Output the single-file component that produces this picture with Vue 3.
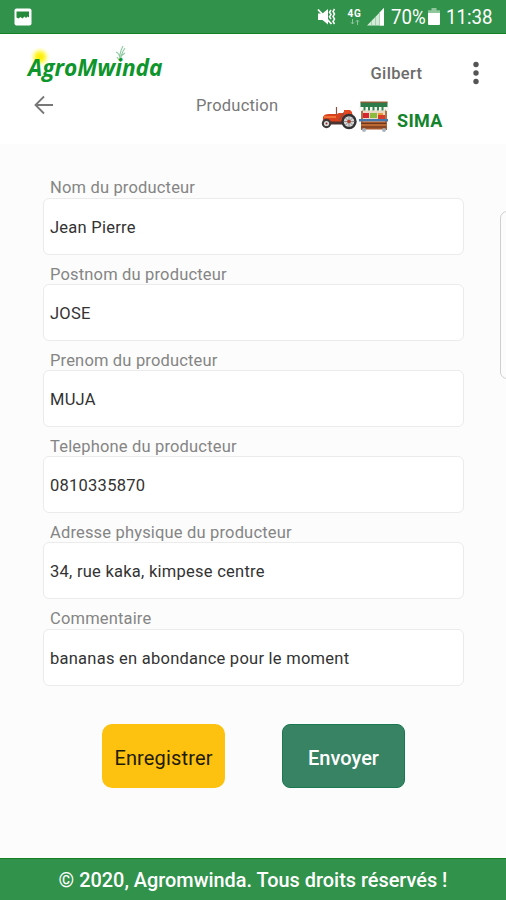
<script setup>
import { ref } from 'vue'

const fields = ref([
  { label: 'Nom du producteur', value: 'Jean Pierre' },
  { label: 'Postnom du producteur', value: 'JOSE' },
  { label: 'Prenom du producteur', value: 'MUJA' },
  { label: 'Telephone du producteur', value: '0810335870' },
  { label: 'Adresse physique du producteur', value: '34, rue kaka, kimpese centre' },
  { label: 'Commentaire', value: 'bananas en abondance pour le moment' },
])
</script>

<template>
  <div class="screen">
    <div class="status">
      <svg class="picture" width="18" height="18" viewBox="0 0 18 18">
        <rect x="0.5" y="0.5" width="17" height="17" rx="2" fill="#fff" />
        <path d="M2.500 3.500h12.500v6l-1.500-1-1.500 1.500-1.500-1.500-2 2-2-1.500-2 1.500-2-1z" fill="#268a3d" />
      </svg>
      <div class="status-right">
        <svg class="mute" width="20" height="18" viewBox="0 0 20 18">
          <path d="M1 5.500h4.500L11 1v15.500L5.500 12H1z" fill="#fff" />
          <path d="M1 1.500 14.500 16" stroke="#fff" stroke-width="1.800" />
          <path d="M14 2l-1.500 2.200 1.500 2.300-1.500 2.300 1.500 2.300M17.500 1l-1.500 2.500 1.500 2.500-1.500 2.500 1.500 2.500-1.500 2.500 1.500 2.500" fill="none" stroke="#fff" stroke-width="1.500" />
        </svg>
        <div class="net">
          <span class="net-name">4G</span>
          <svg width="10" height="6" viewBox="0 0 10 6">
            <path d="M2.500 0v5M1 3.300l1.500 1.700L4 3.300M7.500 6V1M6 2.700 7.500 1 9 2.700" fill="none" stroke="#8fc69b" stroke-width="1" />
          </svg>
        </div>
        <svg class="signal" width="18" height="18" viewBox="0 0 18 18">
          <path d="M0 17.500 17 0v17.500z" fill="#d3ead7" />
          <path d="M12.700 4.500 17 0v17.500h-4.300z" fill="#fff" />
          <path d="M4.500 13v4.500M8.500 9v8.500M12.500 5v12.500" stroke="#8fc69b" stroke-width=".7" />
        </svg>
        <span class="percent"><span class="narrow">70%</span></span>
        <svg class="battery" width="12" height="18" viewBox="0 0 12 18">
          <path d="M3.500 0h5v2.200H12V6H0V2.200h3.500z" fill="#8fc69b" />
          <path d="M0 5h12v11a1 1 0 0 1-1 1H1a1 1 0 0 1-1-1z" fill="#fff" />
        </svg>
        <span class="clock"><span class="narrow">11:38</span></span>
      </div>
    </div>

    <header class="header">
      <div class="left">
        <div class="logo">
          <svg class="sun" width="24" height="24" viewBox="0 0 24 24">
            <defs>
              <radialGradient id="glow">
                <stop offset="0" stop-color="#ffec00" />
                <stop offset=".4" stop-color="#fff52e" />
                <stop offset="1" stop-color="#ffff90" stop-opacity="0" />
              </radialGradient>
            </defs>
            <circle cx="12" cy="12" r="10" fill="url(#glow)" />
          </svg>
          <svg class="plant" width="12" height="18" viewBox="0 0 12 18">
            <path d="M5.500 17Q3.500 9 8 1M6 16Q5.500 9 10 3M5 13Q4 8 1 7M6 11l4-3M4 15l-2-3" fill="none" stroke="#8cc9a0" stroke-width="1.100" />
          </svg>
          <span class="logo-text">AgroMwinda</span>
        </div>
        <svg class="back" width="20" height="20" viewBox="0 0 20 20">
          <path d="M19 10H2M10 1.500 1.500 10l8.500 8.500" fill="none" stroke="#777" stroke-width="1.800" />
        </svg>
      </div>
      <h1 class="title">Production</h1>
      <div class="right">
        <div class="user-row">
          <span class="user">Gilbert</span>
          <svg class="dots" width="8" height="24" viewBox="0 0 8 24">
            <circle cx="4" cy="3.500" r="2.700" fill="#555" />
            <circle cx="4" cy="12" r="2.700" fill="#555" />
            <circle cx="4" cy="20.500" r="2.700" fill="#555" />
          </svg>
        </div>
        <div class="brand">
          <svg class="tractor" width="36" height="24" viewBox="0 0 36 24">
            <path d="M2 11q1-3 6-3h8l2-1h13l1 3 2 3-3 3H18l-4 2H4l-2-2z" fill="#d9401c" />
            <path d="M3 10h12v2H3z" fill="#f07035" />
            <path d="M15.500 9V1M18 14l6-9" fill="none" stroke="#8b5145" stroke-width="1.200" />
            <path d="M23 4h6l2 2v4h-8z" fill="#e34822" />
            <path d="M8 17h15" stroke="#4b3431" stroke-width="3" />
            <circle cx="5.500" cy="17.500" r="4.700" fill="#3f3b3b" />
            <circle cx="5.500" cy="17.500" r="2.600" fill="#ddd" />
            <circle cx="5.500" cy="17.500" r="1" fill="#8b2d20" />
            <circle cx="28" cy="15.500" r="7.700" fill="#333" />
            <circle cx="28" cy="15.500" r="5.200" fill="#d8d8d8" />
            <path d="M28 10.500v10M23 15.500h10M24.500 12l7 7M31.500 12l-7 7" stroke="#777" stroke-width=".8" />
            <circle cx="28" cy="15.500" r="1.800" fill="#b03a25" />
          </svg>
          <svg width="30" height="32" viewBox="0 0 30 32">
            <path d="M2 6h2v23H2zM26 6h2v23h-2z" fill="#a8744a" />
            <path d="M4 8h22v12H4z" fill="#ead9c4" />
            <path d="M1.500 1h27v5.500H1.500z" fill="#2c7a48" />
            <path d="M1.500 .5h27v1.300H1.500z" fill="#9c5a35" />
            <path d="M0 6h30v2q0 2-2 2t-2-2q0 2-2.100 2t-2.200-2q0 2-2.200 2t-2.200-2q0 2-2.200 2T13 8q0 2-2.200 2T8.500 8q0 2-2.100 2T4.200 8q0 2-2 2T0 8z" fill="#f7f7f0" />
            <path d="M4.500 6h2v3.500h-2zM9 6h2v3.500H9zM13.500 6h2v3.500h-2zM18 6h2v3.500h-2zM22.500 6h2v3.500h-2z" fill="#338653" />
            <path d="M4 12h6v5H4z" fill="#d7262f" />
            <path d="M11 12h7v5h-7z" fill="#8abb3c" />
            <path d="M19 14h7v4h-7z" fill="#d73b2c" />
            <path d="M19 12h5v2h-5z" fill="#e99a35" />
            <path d="M0 18h29v2.500H0z" fill="#4576ad" />
            <path d="M2 20.500h25.500v8H2z" fill="#a7572c" />
            <path d="M2 22.500h25.500M2 26h25.500" stroke="#6e371f" stroke-width="1" />
            <path d="M2 24h25.500" stroke="#cf7a3b" stroke-width="1" />
            <circle cx="5" cy="29" r="2" fill="#a7b4bf" />
            <circle cx="25" cy="29" r="2" fill="#a7b4bf" />
          </svg>
          <span class="sima">SIMA</span>
        </div>
      </div>
    </header>

    <main class="form">
      <label v-for="f in fields" :key="f.label" class="field">
        <span class="label">{{ f.label }}</span>
        <span class="box"><span class="value">{{ f.value }}</span></span>
      </label>
      <div class="actions">
        <button class="btn save" type="button">Enregistrer</button>
        <button class="btn send" type="button">Envoyer</button>
      </div>
      <span class="edge-handle"></span>
    </main>

    <footer class="footer">© 2020, Agromwinda. Tous droits réservés !</footer>
  </div>
</template>

<style>
body {
  margin: 0;
}
</style>

<style scoped>
.screen {
  position: relative;
  display: flex;
  flex-direction: column;
  width: 506px;
  height: 900px;
  overflow: hidden;
  background: #fcfcfc;
  font-family: Roboto, "Liberation Sans", sans-serif;
}
.status {
  display: flex;
  justify-content: space-between;
  box-sizing: border-box;
  height: 34px;
  padding: 0 14px;
  background: #31924b;
  border-bottom: 1px solid #138022;
  color: #fff;
}
.picture {
  margin-top: 8px;
}
.status-right {
  display: flex;
  align-items: flex-start;
}
.mute {
  margin: 8px 10px 0 0;
}
.net {
  display: flex;
  flex-direction: column;
  align-items: center;
  width: 15px;
  margin: 9px 5px 0 0;
}
.net-name {
  font-size: 10px;
  font-weight: 700;
  line-height: 10px;
  letter-spacing: 0.8px;
}
.signal {
  margin: 8px 6px 0 0;
}
.percent,
.clock {
  font-size: 21px;
  line-height: 35px;
  white-space: nowrap;
}
.narrow {
  display: inline-block;
  transform: scaleX(0.89);
  transform-origin: left;
}
.percent {
  width: 34px;
}
.battery {
  margin: 8px 6px 0 3px;
}
.clock {
  width: 46px;
}
.header {
  display: flex;
  box-sizing: border-box;
  height: 110px;
  background: #fff;
}
.left {
  display: flex;
  flex-direction: column;
  width: 196px;
}
.logo {
  position: relative;
  height: 61px;
  padding: 20px 0 0 28px;
  box-sizing: border-box;
}
.logo-text {
  position: relative;
  display: block;
  font: italic 700 22.7px/28px "Open Sans", "Noto Sans", sans-serif;
  color: #0e952b;
  white-space: nowrap;
}
.sun {
  position: absolute;
  left: 28px;
  top: 11px;
}
.plant {
  position: absolute;
  left: 115px;
  top: 11px;
}
.back {
  margin-left: 34px;
}
.title {
  width: 110px;
  margin: 62px 0 0;
  font-size: 16.5px;
  font-weight: 400;
  line-height: 20px;
  letter-spacing: 0.2px;
  color: #787878;
  white-space: nowrap;
}
.right {
  display: flex;
  flex-direction: column;
  flex: 1;
}
.user-row {
  display: flex;
  justify-content: space-between;
  align-items: center;
  height: 24px;
  margin: 27px 26px 0 64.500px;
}
.user {
  padding-top: 2px;
  font-size: 16.5px;
  font-weight: 500;
  line-height: 24px;
  letter-spacing: 0.35px;
  color: #6c6c6c;
}
.brand {
  display: flex;
  align-items: center;
  gap: 2px;
  margin: 16px 0 0 15px;
}
.tractor {
  margin-top: 2px;
}
.sima {
  margin: 8px 0 0 6px;
  font-size: 18px;
  font-weight: 700;
  line-height: 22px;
  letter-spacing: 0.3px;
  color: #13832c;
}
.form {
  position: relative;
  display: flex;
  flex-direction: column;
  flex: 1;
  padding: 24.400px 42px 0 43px;
}
.field {
  display: block;
  height: 86.200px;
}
.label {
  display: block;
  height: 29.200px;
  padding-left: 7px;
  font-size: 16.5px;
  line-height: 39px;
  letter-spacing: 0.17px;
  color: #858585;
  white-space: nowrap;
}
.box {
  display: flex;
  align-items: center;
  box-sizing: border-box;
  height: 57px;
  padding-left: 6px;
  background: #fff;
  border: 1px solid #ebebeb;
  border-radius: 6px;
}
.value {
  padding-top: 3px;
  font-size: 16.5px;
  line-height: 20px;
  letter-spacing: 0.25px;
  color: #333;
  white-space: nowrap;
}
.actions {
  display: flex;
  gap: 57px;
  margin: 38px 0 0 59px;
}
.btn {
  width: 123px;
  height: 64px;
  padding: 5px 0 0;
  border: 0;
  border-radius: 10px;
  font-family: inherit;
  font-size: 20px;
  white-space: nowrap;
}
.save {
  background: #fdc110;
  color: #211a05;
  letter-spacing: 0.15px;
}
.send {
  box-sizing: border-box;
  background: #388364;
  border: 1px solid #1b7952;
  border-radius: 8px;
  color: #fff;
  font-weight: 500;
}
.edge-handle {
  position: absolute;
  top: 67px;
  left: 500px;
  width: 16px;
  height: 166px;
  border: 1px solid #cfcfcf;
  border-radius: 7px;
}
.footer {
  box-sizing: border-box;
  height: 42px;
  padding-top: 2px;
  border-top: 1px solid #138022;
  background: #31924b;
  color: #fff;
  font-size: 19.900px;
  font-weight: 500;
  line-height: 40px;
  text-align: center;
  white-space: nowrap;
}
</style>
